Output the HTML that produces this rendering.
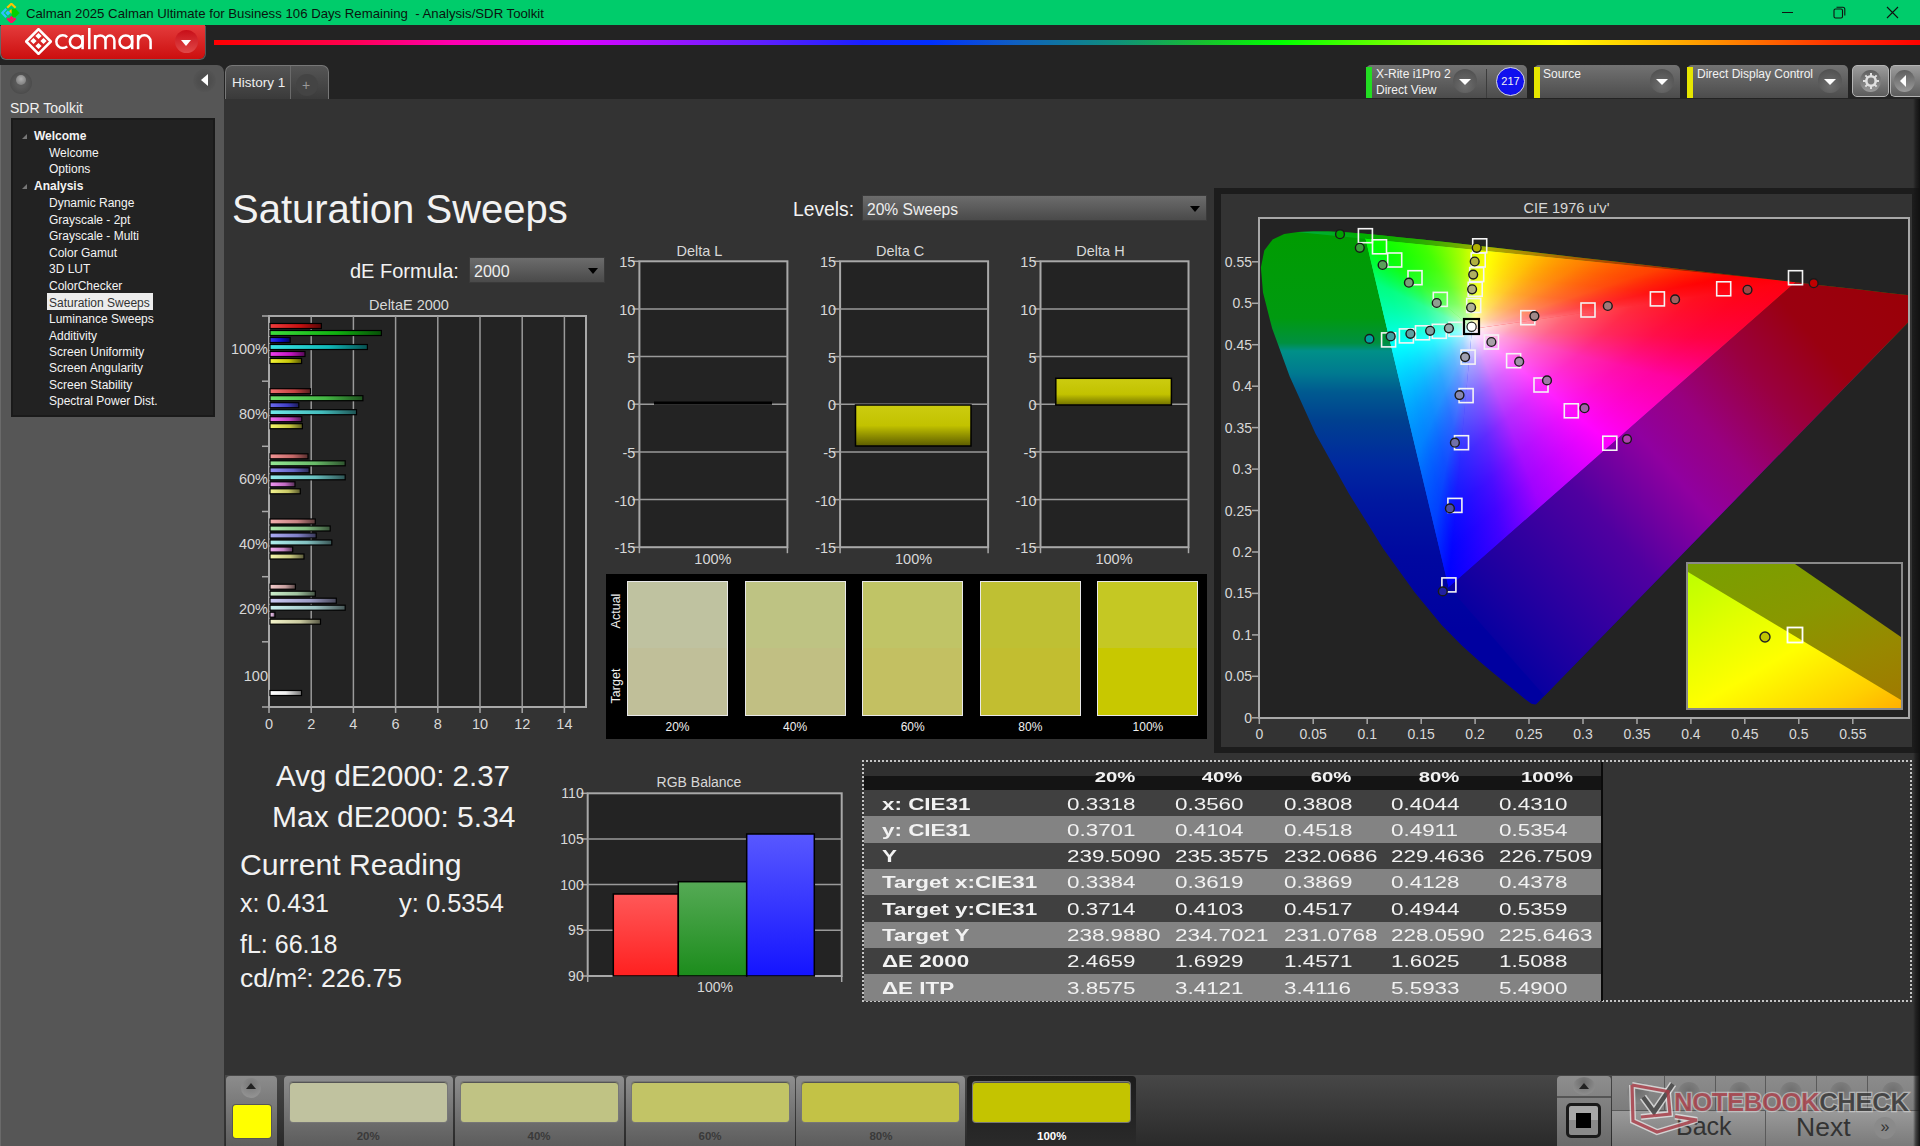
<!DOCTYPE html>
<html><head><meta charset="utf-8">
<style>
*{margin:0;padding:0;box-sizing:border-box}
html,body{width:1920px;height:1146px;overflow:hidden;background:#333;font-family:"Liberation Sans",sans-serif;color:#eee}
.a{position:absolute}
#title{left:0;top:0;width:1920px;height:25px;background:#00cc6b;color:#111;font-size:13.2px}
#hdr{left:0;top:25px;width:1920px;height:74px;background:#232323}
#side{left:0;top:65px;width:224px;height:1081px;background:#565656;border-radius:0 7px 0 0;border-left:1px solid #6a6a6a}
#content{left:225px;top:99px;width:1695px;height:1047px;background:#333}
.inst{top:65px;height:33px;border-radius:5px 5px 0 0;background:linear-gradient(#727272,#4c4c4c);font-size:12px;color:#f2f2f2;line-height:16px}
.stripe{left:0;top:2px;width:6px;bottom:0}
.dd{width:24px;height:24px;border-radius:50%;background:radial-gradient(circle at 50% 70%,#6e6e6e,#4a4a4a);top:4px}
.dd:after{content:"";position:absolute;left:6px;top:10px;border-left:6px solid transparent;border-right:6px solid transparent;border-top:6px solid #fff}
.tree{font-size:12px;color:#f4f4f4;left:0;white-space:nowrap;line-height:14px}
</style></head><body>
<div id="title" class="a">
 <svg class="a" style="left:1px;top:3px" width="20" height="20" viewBox="0 0 20 20">
  <path d="M6.2 4.8L10.4 0.8L14.6 4.8" fill="none" stroke="#ffc400" stroke-width="2.2"/><rect x="8.7" y="6.6" width="3.5" height="3.5" transform="rotate(45 10.45 8.35)" fill="#ffc400"/>
  <path d="M5.2 5.8L1.2 10L5.2 14.2" fill="none" stroke="#30c0ff" stroke-width="2.2"/><rect x="5.2" y="8.3" width="3.5" height="3.5" transform="rotate(45 6.95 10.05)" fill="#30c0ff"/>
  <path d="M10.6 5.8L14.6 5.8L18.6 10L14.6 14.2L10.6 14.2Z" fill="#00d000" transform="rotate(0)"/>
  <path d="M6.2 15.4L10.4 19.4L14.6 15.4" fill="none" stroke="#ff1060" stroke-width="2.2"/><rect x="8.7" y="13.4" width="3.5" height="3.5" transform="rotate(45 10.45 15.15)" fill="#ff1060"/>
 </svg>
 <div class="a" style="left:26px;top:5.5px;white-space:pre;color:#0a140e">Calman 2025 Calman Ultimate for Business 106 Days Remaining  - Analysis/SDR Toolkit</div>
 <div class="a" style="left:1782px;top:12px;width:11px;height:1px;background:#111"></div>
 <svg class="a" style="left:1833px;top:6px" width="14" height="13" viewBox="0 0 14 13"><rect x="1" y="3" width="8.5" height="9" rx="1.5" fill="none" stroke="#111" stroke-width="1.1"/><path d="M3.5 1.2h6.3a2 2 0 0 1 2 2v6.3" fill="none" stroke="#111" stroke-width="1.1"/></svg>
 <svg class="a" style="left:1886px;top:6px" width="13" height="13" viewBox="0 0 13 13"><path d="M1 1L12 12M12 1L1 12" stroke="#111" stroke-width="1.1"/></svg>
</div>
<div id="hdr" class="a">
 <div class="a" style="left:1px;top:0;width:204px;height:33.5px;border-radius:0 0 6px 6px;background:linear-gradient(#e43c3c,#cc0e0e);box-shadow:-1px 1px 0 0 #666,1px 1px 0 0 #555"></div>
 <svg class="a" style="left:25px;top:3px" width="27" height="27" viewBox="0 0 27 27">
  <path d="M13.5 1.2L25.8 13.5L13.5 25.8L1.2 13.5Z" fill="none" stroke="#fff" stroke-width="2.6" stroke-linejoin="round"/>
  <g fill="#fff"><rect x="11.3" y="5.8" width="4.4" height="4.4" transform="rotate(45 13.5 8)"/><rect x="6.3" y="10.8" width="4.4" height="4.4" transform="rotate(45 8.5 13)"/><rect x="16.3" y="10.8" width="4.4" height="4.4" transform="rotate(45 18.5 13)"/><rect x="11.3" y="15.8" width="4.4" height="4.4" transform="rotate(45 13.5 18)"/></g>
 </svg>
 <svg class="a" style="left:0;top:-25px" width="160" height="60" viewBox="0 0 160 60"><g fill="none" stroke="#fff" stroke-width="2.5">
  <path d="M67.2 37.1 A6.4 6.4 0 1 0 67.2 46.3"/>
  <circle cx="76.2" cy="41.7" r="6.3"/><path d="M82.6 35 V49.2"/>
  <path d="M89.3 28 V49.2"/>
  <path d="M95.1 49.2 V35 M95.1 40.7 A5.2 5.3 0 0 1 105.5 40.7 V49.2 M105.5 40.7 A4.45 5.3 0 0 1 114.4 40.7 V49.2"/>
  <circle cx="125.8" cy="41.7" r="6.3"/><path d="M132.2 35 V49.2"/>
  <path d="M138.1 49.2 V35 M138.1 41.6 A6.25 6.3 0 0 1 150.6 41.6 V49.2"/>
 </g></svg>
 <div class="a" style="left:175px;top:5px;width:23px;height:23px;border-radius:50%;background:linear-gradient(#c80e18,#e04848)"></div>
 <div class="a" style="left:181px;top:15px;border-left:5.5px solid transparent;border-right:5.5px solid transparent;border-top:6px solid #fff"></div>
 <div class="a" style="left:214px;top:15px;width:1706px;height:5px;background:linear-gradient(90deg,#ff0000 0%,#ff0050 8%,#ff00b0 14%,#e000ff 21%,#b010ff 25%,#6020ff 32%,#1a20ff 38%,#0030ff 42%,#1060c0 47%,#10907a 53%,#18c030 58%,#00ff00 62.5%,#90ff00 71%,#ffff00 79%,#ff9000 88%,#ff3000 95%,#ff0000 100%)"></div>
</div>
<div id="side" class="a">
 <div class="a" style="left:9px;top:7px;width:22px;height:22px;border-radius:50%;background:radial-gradient(circle,#5a5a5a 30%,#4c4c4c 70%,#555 100%)"></div>
 <div class="a" style="left:15px;top:10px;width:10px;height:10px;border-radius:50%;background:radial-gradient(circle at 50% 40%,#b0b0b0,#707070)"></div>
 <div class="a" style="left:192px;top:4px;width:23px;height:23px;border-radius:50%;background:radial-gradient(circle,#4e4e4e 40%,#5a5a5a 100%)"></div>
 <div class="a" style="left:200px;top:9px;border-top:6px solid transparent;border-bottom:6px solid transparent;border-right:7px solid #fff"></div>
 <div class="a" style="left:9px;top:35px;font-size:14px;color:#f0f0f0">SDR Toolkit</div>
 <div class="a" style="left:10px;top:53px;width:204px;height:299px;background:#222;border:2px solid #1a1a1a">
  <div class="a tree" style="top:9px;left:21px;font-weight:bold">Welcome</div>
  <div class="a tree" style="top:26px;left:36px">Welcome</div>
  <div class="a tree" style="top:42px;left:36px">Options</div>
  <div class="a tree" style="top:59px;left:21px;font-weight:bold">Analysis</div>
  <div class="a tree" style="top:76px;left:36px">Dynamic Range</div>
  <div class="a tree" style="top:93px;left:36px">Grayscale - 2pt</div>
  <div class="a tree" style="top:109px;left:36px">Grayscale - Multi</div>
  <div class="a tree" style="top:126px;left:36px">Color Gamut</div>
  <div class="a tree" style="top:142px;left:36px">3D LUT</div>
  <div class="a tree" style="top:159px;left:36px">ColorChecker</div>
  <div class="a" style="top:173px;left:34px;width:106px;height:17px;background:#ececec"></div>
  <div class="a tree" style="top:176px;left:36px;color:#333">Saturation Sweeps</div>
  <div class="a tree" style="top:192px;left:36px">Luminance Sweeps</div>
  <div class="a tree" style="top:209px;left:36px">Additivity</div>
  <div class="a tree" style="top:225px;left:36px">Screen Uniformity</div>
  <div class="a tree" style="top:241px;left:36px">Screen Angularity</div>
  <div class="a tree" style="top:258px;left:36px">Screen Stability</div>
  <div class="a tree" style="top:274px;left:36px">Spectral Power Dist.</div>
  <div class="a" style="left:9px;top:14px;border-left:5px solid transparent;border-bottom:5px solid #777"></div>
  <div class="a" style="left:9px;top:64px;border-left:5px solid transparent;border-bottom:5px solid #777"></div>
 </div>
</div>
<div class="a" style="left:225px;top:65px;width:104px;height:34px;border-radius:7px 7px 0 0;background:linear-gradient(#555,#3a3a3a);border:1px solid #777;border-bottom:none">
 <div class="a" style="left:6px;top:9px;font-size:13.5px;color:#eee">History 1</div>
 <div class="a" style="left:64px;top:0;width:1px;bottom:0;background:#6a6a6a"></div>
 <div class="a" style="left:70px;top:8px;width:22px;height:22px;border-radius:50%;background:#444"></div>
 <div class="a" style="left:76px;top:11px;font-size:14px;color:#999">+</div>
</div>
<div id="content" class="a"></div>
<!-- instruments -->
<div class="a inst" style="left:1366px;width:161px">
 <div class="a stripe" style="background:#22dd22"></div>
 <div class="a" style="left:10px;top:1px">X-Rite i1Pro 2<br>Direct View</div>
 <div class="a dd" style="left:87px"></div>
 <div class="a" style="left:120px;top:4px;width:1px;bottom:0;background:#3c3c3c"></div>
 <div class="a" style="left:130px;top:2px;width:29px;height:29px;border-radius:50%;background:#1010ee;border:1px solid #ddd;font-size:11px;text-align:center;line-height:27px">217</div>
</div>
<div class="a inst" style="left:1534px;width:146px">
 <div class="a stripe" style="background:#e6e600"></div>
 <div class="a" style="left:9px;top:1px">Source</div>
 <div class="a dd" style="left:116px"></div>
</div>
<div class="a inst" style="left:1687px;width:161px">
 <div class="a stripe" style="background:#e6e600"></div>
 <div class="a" style="left:10px;top:1px">Direct Display Control</div>
 <div class="a dd" style="left:131px"></div>
</div>
<div class="a" style="left:1852px;top:65px;width:37px;height:32px;border-radius:5px;background:linear-gradient(#9c9c9c,#5c5c5c);border:1.5px solid #b4b4b4">
 <div class="a" style="left:7px;top:4px;width:21px;height:22px;border-radius:50%;background:linear-gradient(#5e5e5e,#9a9a9a)"></div>
 <svg class="a" style="left:7.5px;top:5px" width="20" height="20" viewBox="0 0 20 20"><g fill="#e0e0e0"><rect x="9" y="2" width="2" height="16"/><rect x="9" y="2" width="2" height="16" transform="rotate(45 10 10)"/><rect x="9" y="2" width="2" height="16" transform="rotate(90 10 10)"/><rect x="9" y="2" width="2" height="16" transform="rotate(135 10 10)"/><circle cx="10" cy="10" r="6"/></g><circle cx="10" cy="10" r="3.4" fill="#7a7a7a"/></svg>
</div>
<div class="a" style="left:1890px;top:65px;width:30px;height:32px;border-radius:5px 0 0 5px;background:linear-gradient(#9c9c9c,#5c5c5c);border:1.5px solid #b4b4b4;border-right:none">
 <div class="a" style="left:3px;top:4px;width:21px;height:22px;border-radius:50%;background:linear-gradient(#5e5e5e,#9a9a9a)"></div>
 <div class="a" style="left:9px;top:9px;border-top:6px solid transparent;border-bottom:6px solid transparent;border-right:6.5px solid #fff"></div>
</div>
<svg class="a" style="left:0;top:0;font-family:'Liberation Sans',sans-serif" width="1920" height="1146" viewBox="0 0 1920 1146"><defs><linearGradient id="bg00" x1="0" y1="0" x2="1" y2="0"><stop offset="0" stop-color="rgb(241, 61, 61)"/><stop offset="0.6" stop-color="rgb(196, 16, 16)"/><stop offset="1" stop-color="rgb(88, 7, 7)"/></linearGradient><linearGradient id="bg01" x1="0" y1="0" x2="1" y2="0"><stop offset="0" stop-color="rgb(61, 221, 61)"/><stop offset="0.6" stop-color="rgb(16, 176, 16)"/><stop offset="1" stop-color="rgb(7, 79, 7)"/></linearGradient><linearGradient id="bg02" x1="0" y1="0" x2="1" y2="0"><stop offset="0" stop-color="rgb(55, 55, 241)"/><stop offset="0.6" stop-color="rgb(10, 10, 196)"/><stop offset="1" stop-color="rgb(4, 4, 88)"/></linearGradient><linearGradient id="bg03" x1="0" y1="0" x2="1" y2="0"><stop offset="0" stop-color="rgb(61, 229, 229)"/><stop offset="0.6" stop-color="rgb(16, 184, 184)"/><stop offset="1" stop-color="rgb(7, 82, 82)"/></linearGradient><linearGradient id="bg04" x1="0" y1="0" x2="1" y2="0"><stop offset="0" stop-color="rgb(237, 65, 237)"/><stop offset="0.6" stop-color="rgb(192, 20, 192)"/><stop offset="1" stop-color="rgb(86, 9, 86)"/></linearGradient><linearGradient id="bg05" x1="0" y1="0" x2="1" y2="0"><stop offset="0" stop-color="rgb(245, 245, 55)"/><stop offset="0.6" stop-color="rgb(200, 200, 10)"/><stop offset="1" stop-color="rgb(90, 90, 4)"/></linearGradient><linearGradient id="bg10" x1="0" y1="0" x2="1" y2="0"><stop offset="0" stop-color="rgb(242, 112, 112)"/><stop offset="0.6" stop-color="rgb(197, 67, 67)"/><stop offset="1" stop-color="rgb(88, 30, 30)"/></linearGradient><linearGradient id="bg11" x1="0" y1="0" x2="1" y2="0"><stop offset="0" stop-color="rgb(112, 227, 112)"/><stop offset="0.6" stop-color="rgb(67, 182, 67)"/><stop offset="1" stop-color="rgb(30, 81, 30)"/></linearGradient><linearGradient id="bg12" x1="0" y1="0" x2="1" y2="0"><stop offset="0" stop-color="rgb(108, 108, 242)"/><stop offset="0.6" stop-color="rgb(63, 63, 197)"/><stop offset="1" stop-color="rgb(28, 28, 88)"/></linearGradient><linearGradient id="bg13" x1="0" y1="0" x2="1" y2="0"><stop offset="0" stop-color="rgb(112, 233, 233)"/><stop offset="0.6" stop-color="rgb(67, 188, 188)"/><stop offset="1" stop-color="rgb(30, 84, 84)"/></linearGradient><linearGradient id="bg14" x1="0" y1="0" x2="1" y2="0"><stop offset="0" stop-color="rgb(239, 115, 239)"/><stop offset="0.6" stop-color="rgb(194, 70, 194)"/><stop offset="1" stop-color="rgb(87, 31, 87)"/></linearGradient><linearGradient id="bg15" x1="0" y1="0" x2="1" y2="0"><stop offset="0" stop-color="rgb(245, 245, 108)"/><stop offset="0.6" stop-color="rgb(200, 200, 63)"/><stop offset="1" stop-color="rgb(90, 90, 28)"/></linearGradient><linearGradient id="bg20" x1="0" y1="0" x2="1" y2="0"><stop offset="0" stop-color="rgb(242, 149, 149)"/><stop offset="0.6" stop-color="rgb(197, 104, 104)"/><stop offset="1" stop-color="rgb(88, 46, 46)"/></linearGradient><linearGradient id="bg21" x1="0" y1="0" x2="1" y2="0"><stop offset="0" stop-color="rgb(149, 232, 149)"/><stop offset="0.6" stop-color="rgb(104, 187, 104)"/><stop offset="1" stop-color="rgb(46, 84, 46)"/></linearGradient><linearGradient id="bg22" x1="0" y1="0" x2="1" y2="0"><stop offset="0" stop-color="rgb(146, 146, 242)"/><stop offset="0.6" stop-color="rgb(101, 101, 197)"/><stop offset="1" stop-color="rgb(45, 45, 88)"/></linearGradient><linearGradient id="bg23" x1="0" y1="0" x2="1" y2="0"><stop offset="0" stop-color="rgb(149, 236, 236)"/><stop offset="0.6" stop-color="rgb(104, 191, 191)"/><stop offset="1" stop-color="rgb(46, 85, 85)"/></linearGradient><linearGradient id="bg24" x1="0" y1="0" x2="1" y2="0"><stop offset="0" stop-color="rgb(240, 151, 240)"/><stop offset="0.6" stop-color="rgb(195, 106, 195)"/><stop offset="1" stop-color="rgb(87, 47, 87)"/></linearGradient><linearGradient id="bg25" x1="0" y1="0" x2="1" y2="0"><stop offset="0" stop-color="rgb(245, 245, 146)"/><stop offset="0.6" stop-color="rgb(200, 200, 101)"/><stop offset="1" stop-color="rgb(90, 90, 45)"/></linearGradient><linearGradient id="bg30" x1="0" y1="0" x2="1" y2="0"><stop offset="0" stop-color="rgb(243, 175, 175)"/><stop offset="0.6" stop-color="rgb(198, 130, 130)"/><stop offset="1" stop-color="rgb(89, 58, 58)"/></linearGradient><linearGradient id="bg31" x1="0" y1="0" x2="1" y2="0"><stop offset="0" stop-color="rgb(175, 235, 175)"/><stop offset="0.6" stop-color="rgb(130, 190, 130)"/><stop offset="1" stop-color="rgb(58, 85, 58)"/></linearGradient><linearGradient id="bg32" x1="0" y1="0" x2="1" y2="0"><stop offset="0" stop-color="rgb(172, 172, 243)"/><stop offset="0.6" stop-color="rgb(127, 127, 198)"/><stop offset="1" stop-color="rgb(57, 57, 89)"/></linearGradient><linearGradient id="bg33" x1="0" y1="0" x2="1" y2="0"><stop offset="0" stop-color="rgb(175, 238, 238)"/><stop offset="0.6" stop-color="rgb(130, 193, 193)"/><stop offset="1" stop-color="rgb(58, 86, 86)"/></linearGradient><linearGradient id="bg34" x1="0" y1="0" x2="1" y2="0"><stop offset="0" stop-color="rgb(241, 176, 241)"/><stop offset="0.6" stop-color="rgb(196, 131, 196)"/><stop offset="1" stop-color="rgb(88, 58, 88)"/></linearGradient><linearGradient id="bg35" x1="0" y1="0" x2="1" y2="0"><stop offset="0" stop-color="rgb(245, 245, 172)"/><stop offset="0.6" stop-color="rgb(200, 200, 127)"/><stop offset="1" stop-color="rgb(90, 90, 57)"/></linearGradient><linearGradient id="bg40" x1="0" y1="0" x2="1" y2="0"><stop offset="0" stop-color="rgb(244, 204, 204)"/><stop offset="0.6" stop-color="rgb(199, 159, 159)"/><stop offset="1" stop-color="rgb(89, 71, 71)"/></linearGradient><linearGradient id="bg41" x1="0" y1="0" x2="1" y2="0"><stop offset="0" stop-color="rgb(204, 239, 204)"/><stop offset="0.6" stop-color="rgb(159, 194, 159)"/><stop offset="1" stop-color="rgb(71, 87, 71)"/></linearGradient><linearGradient id="bg42" x1="0" y1="0" x2="1" y2="0"><stop offset="0" stop-color="rgb(203, 203, 244)"/><stop offset="0.6" stop-color="rgb(158, 158, 199)"/><stop offset="1" stop-color="rgb(71, 71, 89)"/></linearGradient><linearGradient id="bg43" x1="0" y1="0" x2="1" y2="0"><stop offset="0" stop-color="rgb(204, 241, 241)"/><stop offset="0.6" stop-color="rgb(159, 196, 196)"/><stop offset="1" stop-color="rgb(71, 88, 88)"/></linearGradient><linearGradient id="bg44" x1="0" y1="0" x2="1" y2="0"><stop offset="0" stop-color="rgb(243, 205, 243)"/><stop offset="0.6" stop-color="rgb(198, 160, 198)"/><stop offset="1" stop-color="rgb(89, 72, 89)"/></linearGradient><linearGradient id="bg45" x1="0" y1="0" x2="1" y2="0"><stop offset="0" stop-color="rgb(245, 245, 203)"/><stop offset="0.6" stop-color="rgb(200, 200, 158)"/><stop offset="1" stop-color="rgb(90, 90, 71)"/></linearGradient><linearGradient id="bgw" x1="0" y1="0" x2="1" y2="0"><stop offset="0" stop-color="#fff"/><stop offset="0.5" stop-color="#eee"/><stop offset="1" stop-color="#777"/></linearGradient><linearGradient id="ybar" x1="0" y1="0" x2="0" y2="1"><stop offset="0" stop-color="#cccc10"/><stop offset="0.5" stop-color="#c2c200"/><stop offset="1" stop-color="#5c5c00"/></linearGradient><linearGradient id="ybar2" x1="0" y1="0" x2="0" y2="1"><stop offset="0" stop-color="#cccc10"/><stop offset="0.6" stop-color="#c2c200"/><stop offset="1" stop-color="#707000"/></linearGradient><linearGradient id="rr" x1="0" y1="0" x2="0" y2="1"><stop offset="0" stop-color="#ff5858"/><stop offset="1" stop-color="#ff2020"/></linearGradient><linearGradient id="rg" x1="0" y1="0" x2="0" y2="1"><stop offset="0" stop-color="#55aa55"/><stop offset="1" stop-color="#1c8c1c"/></linearGradient><linearGradient id="rb" x1="0" y1="0" x2="0" y2="1"><stop offset="0" stop-color="#5858ff"/><stop offset="1" stop-color="#1414ff"/></linearGradient></defs><rect x="269" y="316" width="317" height="391" fill="#232323" stroke="#a8a8a8" stroke-width="2"/><line x1="311.2" y1="316" x2="311.2" y2="707" stroke="#9a9a9a" stroke-width="1.5"/><line x1="353.4" y1="316" x2="353.4" y2="707" stroke="#9a9a9a" stroke-width="1.5"/><line x1="395.6" y1="316" x2="395.6" y2="707" stroke="#9a9a9a" stroke-width="1.5"/><line x1="437.8" y1="316" x2="437.8" y2="707" stroke="#9a9a9a" stroke-width="1.5"/><line x1="480.0" y1="316" x2="480.0" y2="707" stroke="#9a9a9a" stroke-width="1.5"/><line x1="522.2" y1="316" x2="522.2" y2="707" stroke="#9a9a9a" stroke-width="1.5"/><line x1="564.4" y1="316" x2="564.4" y2="707" stroke="#9a9a9a" stroke-width="1.5"/><line x1="269.0" y1="707" x2="269.0" y2="713" stroke="#a8a8a8" stroke-width="1.5"/><text x="269.0" y="729" font-size="14.5" text-anchor="middle" fill="#d8d8d8" font-weight="normal" >0</text><line x1="311.2" y1="707" x2="311.2" y2="713" stroke="#a8a8a8" stroke-width="1.5"/><text x="311.2" y="729" font-size="14.5" text-anchor="middle" fill="#d8d8d8" font-weight="normal" >2</text><line x1="353.4" y1="707" x2="353.4" y2="713" stroke="#a8a8a8" stroke-width="1.5"/><text x="353.4" y="729" font-size="14.5" text-anchor="middle" fill="#d8d8d8" font-weight="normal" >4</text><line x1="395.6" y1="707" x2="395.6" y2="713" stroke="#a8a8a8" stroke-width="1.5"/><text x="395.6" y="729" font-size="14.5" text-anchor="middle" fill="#d8d8d8" font-weight="normal" >6</text><line x1="437.8" y1="707" x2="437.8" y2="713" stroke="#a8a8a8" stroke-width="1.5"/><text x="437.8" y="729" font-size="14.5" text-anchor="middle" fill="#d8d8d8" font-weight="normal" >8</text><line x1="480.0" y1="707" x2="480.0" y2="713" stroke="#a8a8a8" stroke-width="1.5"/><text x="480.0" y="729" font-size="14.5" text-anchor="middle" fill="#d8d8d8" font-weight="normal" >10</text><line x1="522.2" y1="707" x2="522.2" y2="713" stroke="#a8a8a8" stroke-width="1.5"/><text x="522.2" y="729" font-size="14.5" text-anchor="middle" fill="#d8d8d8" font-weight="normal" >12</text><line x1="564.4" y1="707" x2="564.4" y2="713" stroke="#a8a8a8" stroke-width="1.5"/><text x="564.4" y="729" font-size="14.5" text-anchor="middle" fill="#d8d8d8" font-weight="normal" >14</text><line x1="262" y1="316.0" x2="269" y2="316.0" stroke="#a8a8a8" stroke-width="1.5"/><line x1="262" y1="381.2" x2="269" y2="381.2" stroke="#a8a8a8" stroke-width="1.5"/><line x1="262" y1="446.3" x2="269" y2="446.3" stroke="#a8a8a8" stroke-width="1.5"/><line x1="262" y1="511.5" x2="269" y2="511.5" stroke="#a8a8a8" stroke-width="1.5"/><line x1="262" y1="576.7" x2="269" y2="576.7" stroke="#a8a8a8" stroke-width="1.5"/><line x1="262" y1="641.8" x2="269" y2="641.8" stroke="#a8a8a8" stroke-width="1.5"/><line x1="262" y1="707.0" x2="269" y2="707.0" stroke="#a8a8a8" stroke-width="1.5"/><text x="268" y="353.6" font-size="14.5" text-anchor="end" fill="#d8d8d8" font-weight="normal" >100%</text><text x="268" y="418.8" font-size="14.5" text-anchor="end" fill="#d8d8d8" font-weight="normal" >80%</text><text x="268" y="483.9" font-size="14.5" text-anchor="end" fill="#d8d8d8" font-weight="normal" >60%</text><text x="268" y="549.1" font-size="14.5" text-anchor="end" fill="#d8d8d8" font-weight="normal" >40%</text><text x="268" y="614.2" font-size="14.5" text-anchor="end" fill="#d8d8d8" font-weight="normal" >20%</text><text x="268" y="681.4" font-size="14.5" text-anchor="end" fill="#d8d8d8" font-weight="normal" >100</text><text x="409" y="310" font-size="14.5" text-anchor="middle" fill="#d8d8d8" font-weight="normal" >DeltaE 2000</text><rect x="270" y="323.5" width="51.4" height="5" fill="url(#bg00)" stroke="#000" stroke-width="1.2"/><rect x="270" y="330.5" width="111.4" height="5" fill="url(#bg01)" stroke="#000" stroke-width="1.2"/><rect x="270" y="337.5" width="20.2" height="5" fill="url(#bg02)" stroke="#000" stroke-width="1.2"/><rect x="270" y="344.5" width="97.4" height="5" fill="url(#bg03)" stroke="#000" stroke-width="1.2"/><rect x="270" y="351.5" width="35.0" height="5" fill="url(#bg04)" stroke="#000" stroke-width="1.2"/><rect x="270" y="358.5" width="31.6" height="5" fill="url(#bg05)" stroke="#000" stroke-width="1.2"/><rect x="270" y="388.7" width="40.5" height="5" fill="url(#bg10)" stroke="#000" stroke-width="1.2"/><rect x="270" y="395.7" width="92.9" height="5" fill="url(#bg11)" stroke="#000" stroke-width="1.2"/><rect x="270" y="402.7" width="28.8" height="5" fill="url(#bg12)" stroke="#000" stroke-width="1.2"/><rect x="270" y="409.7" width="86.5" height="5" fill="url(#bg13)" stroke="#000" stroke-width="1.2"/><rect x="270" y="416.7" width="31.8" height="5" fill="url(#bg14)" stroke="#000" stroke-width="1.2"/><rect x="270" y="423.7" width="32.4" height="5" fill="url(#bg15)" stroke="#000" stroke-width="1.2"/><rect x="270" y="453.8" width="38.0" height="5" fill="url(#bg20)" stroke="#000" stroke-width="1.2"/><rect x="270" y="460.8" width="75.2" height="5" fill="url(#bg21)" stroke="#000" stroke-width="1.2"/><rect x="270" y="467.8" width="39.2" height="5" fill="url(#bg22)" stroke="#000" stroke-width="1.2"/><rect x="270" y="474.8" width="75.2" height="5" fill="url(#bg23)" stroke="#000" stroke-width="1.2"/><rect x="270" y="481.8" width="25.0" height="5" fill="url(#bg24)" stroke="#000" stroke-width="1.2"/><rect x="270" y="488.8" width="30.3" height="5" fill="url(#bg25)" stroke="#000" stroke-width="1.2"/><rect x="270" y="519.0" width="45.3" height="5" fill="url(#bg30)" stroke="#000" stroke-width="1.2"/><rect x="270" y="526.0" width="60.2" height="5" fill="url(#bg31)" stroke="#000" stroke-width="1.2"/><rect x="270" y="533.0" width="46.2" height="5" fill="url(#bg32)" stroke="#000" stroke-width="1.2"/><rect x="270" y="540.0" width="61.8" height="5" fill="url(#bg33)" stroke="#000" stroke-width="1.2"/><rect x="270" y="547.0" width="22.7" height="5" fill="url(#bg34)" stroke="#000" stroke-width="1.2"/><rect x="270" y="554.0" width="34.0" height="5" fill="url(#bg35)" stroke="#000" stroke-width="1.2"/><rect x="270" y="584.2" width="25.4" height="5" fill="url(#bg40)" stroke="#000" stroke-width="1.2"/><rect x="270" y="591.2" width="45.3" height="5" fill="url(#bg41)" stroke="#000" stroke-width="1.2"/><rect x="270" y="598.2" width="66.3" height="5" fill="url(#bg42)" stroke="#000" stroke-width="1.2"/><rect x="270" y="605.2" width="75.2" height="5" fill="url(#bg43)" stroke="#000" stroke-width="1.2"/><rect x="270" y="612.2" width="5.0" height="5" fill="url(#bg44)" stroke="#000" stroke-width="1.2"/><rect x="270" y="619.2" width="50.5" height="5" fill="url(#bg45)" stroke="#000" stroke-width="1.2"/><rect x="270" y="690.5" width="31.5" height="5" fill="url(#bgw)" stroke="#000" stroke-width="1.2"/><rect x="639.4" y="261.3" width="148" height="285.9" fill="#232323" stroke="#a8a8a8" stroke-width="2"/><line x1="632.4" y1="261.3" x2="639.4" y2="261.3" stroke="#a8a8a8" stroke-width="1.5"/><text x="635.4" y="267.3" font-size="14.5" text-anchor="end" fill="#d8d8d8" font-weight="normal" >15</text><line x1="639.4" y1="309.0" x2="787.4" y2="309.0" stroke="#9a9a9a" stroke-width="1.5"/><line x1="632.4" y1="309.0" x2="639.4" y2="309.0" stroke="#a8a8a8" stroke-width="1.5"/><text x="635.4" y="315.0" font-size="14.5" text-anchor="end" fill="#d8d8d8" font-weight="normal" >10</text><line x1="639.4" y1="356.6" x2="787.4" y2="356.6" stroke="#9a9a9a" stroke-width="1.5"/><line x1="632.4" y1="356.6" x2="639.4" y2="356.6" stroke="#a8a8a8" stroke-width="1.5"/><text x="635.4" y="362.6" font-size="14.5" text-anchor="end" fill="#d8d8d8" font-weight="normal" >5</text><line x1="639.4" y1="404.2" x2="787.4" y2="404.2" stroke="#9a9a9a" stroke-width="1.5"/><line x1="632.4" y1="404.2" x2="639.4" y2="404.2" stroke="#a8a8a8" stroke-width="1.5"/><text x="635.4" y="410.2" font-size="14.5" text-anchor="end" fill="#d8d8d8" font-weight="normal" >0</text><line x1="639.4" y1="451.9" x2="787.4" y2="451.9" stroke="#9a9a9a" stroke-width="1.5"/><line x1="632.4" y1="451.9" x2="639.4" y2="451.9" stroke="#a8a8a8" stroke-width="1.5"/><text x="635.4" y="457.9" font-size="14.5" text-anchor="end" fill="#d8d8d8" font-weight="normal" >-5</text><line x1="639.4" y1="499.6" x2="787.4" y2="499.6" stroke="#9a9a9a" stroke-width="1.5"/><line x1="632.4" y1="499.6" x2="639.4" y2="499.6" stroke="#a8a8a8" stroke-width="1.5"/><text x="635.4" y="505.6" font-size="14.5" text-anchor="end" fill="#d8d8d8" font-weight="normal" >-10</text><line x1="632.4" y1="547.2" x2="639.4" y2="547.2" stroke="#a8a8a8" stroke-width="1.5"/><text x="635.4" y="553.2" font-size="14.5" text-anchor="end" fill="#d8d8d8" font-weight="normal" >-15</text><line x1="639.4" y1="547.2" x2="639.4" y2="553.2" stroke="#a8a8a8" stroke-width="1.5"/><line x1="787.4" y1="547.2" x2="787.4" y2="553.2" stroke="#a8a8a8" stroke-width="1.5"/><text x="712.9" y="564" font-size="14.5" text-anchor="middle" fill="#d8d8d8" font-weight="normal" >100%</text><text x="699.4" y="256" font-size="14.5" text-anchor="middle" fill="#d8d8d8" font-weight="normal" >Delta L</text><rect x="840.1" y="261.3" width="148" height="285.9" fill="#232323" stroke="#a8a8a8" stroke-width="2"/><line x1="833.1" y1="261.3" x2="840.1" y2="261.3" stroke="#a8a8a8" stroke-width="1.5"/><text x="836.1" y="267.3" font-size="14.5" text-anchor="end" fill="#d8d8d8" font-weight="normal" >15</text><line x1="840.1" y1="309.0" x2="988.1" y2="309.0" stroke="#9a9a9a" stroke-width="1.5"/><line x1="833.1" y1="309.0" x2="840.1" y2="309.0" stroke="#a8a8a8" stroke-width="1.5"/><text x="836.1" y="315.0" font-size="14.5" text-anchor="end" fill="#d8d8d8" font-weight="normal" >10</text><line x1="840.1" y1="356.6" x2="988.1" y2="356.6" stroke="#9a9a9a" stroke-width="1.5"/><line x1="833.1" y1="356.6" x2="840.1" y2="356.6" stroke="#a8a8a8" stroke-width="1.5"/><text x="836.1" y="362.6" font-size="14.5" text-anchor="end" fill="#d8d8d8" font-weight="normal" >5</text><line x1="840.1" y1="404.2" x2="988.1" y2="404.2" stroke="#9a9a9a" stroke-width="1.5"/><line x1="833.1" y1="404.2" x2="840.1" y2="404.2" stroke="#a8a8a8" stroke-width="1.5"/><text x="836.1" y="410.2" font-size="14.5" text-anchor="end" fill="#d8d8d8" font-weight="normal" >0</text><line x1="840.1" y1="451.9" x2="988.1" y2="451.9" stroke="#9a9a9a" stroke-width="1.5"/><line x1="833.1" y1="451.9" x2="840.1" y2="451.9" stroke="#a8a8a8" stroke-width="1.5"/><text x="836.1" y="457.9" font-size="14.5" text-anchor="end" fill="#d8d8d8" font-weight="normal" >-5</text><line x1="840.1" y1="499.6" x2="988.1" y2="499.6" stroke="#9a9a9a" stroke-width="1.5"/><line x1="833.1" y1="499.6" x2="840.1" y2="499.6" stroke="#a8a8a8" stroke-width="1.5"/><text x="836.1" y="505.6" font-size="14.5" text-anchor="end" fill="#d8d8d8" font-weight="normal" >-10</text><line x1="833.1" y1="547.2" x2="840.1" y2="547.2" stroke="#a8a8a8" stroke-width="1.5"/><text x="836.1" y="553.2" font-size="14.5" text-anchor="end" fill="#d8d8d8" font-weight="normal" >-15</text><line x1="840.1" y1="547.2" x2="840.1" y2="553.2" stroke="#a8a8a8" stroke-width="1.5"/><line x1="988.1" y1="547.2" x2="988.1" y2="553.2" stroke="#a8a8a8" stroke-width="1.5"/><text x="913.6" y="564" font-size="14.5" text-anchor="middle" fill="#d8d8d8" font-weight="normal" >100%</text><text x="900.1" y="256" font-size="14.5" text-anchor="middle" fill="#d8d8d8" font-weight="normal" >Delta C</text><rect x="1040.5" y="261.3" width="148" height="285.9" fill="#232323" stroke="#a8a8a8" stroke-width="2"/><line x1="1033.5" y1="261.3" x2="1040.5" y2="261.3" stroke="#a8a8a8" stroke-width="1.5"/><text x="1036.5" y="267.3" font-size="14.5" text-anchor="end" fill="#d8d8d8" font-weight="normal" >15</text><line x1="1040.5" y1="309.0" x2="1188.5" y2="309.0" stroke="#9a9a9a" stroke-width="1.5"/><line x1="1033.5" y1="309.0" x2="1040.5" y2="309.0" stroke="#a8a8a8" stroke-width="1.5"/><text x="1036.5" y="315.0" font-size="14.5" text-anchor="end" fill="#d8d8d8" font-weight="normal" >10</text><line x1="1040.5" y1="356.6" x2="1188.5" y2="356.6" stroke="#9a9a9a" stroke-width="1.5"/><line x1="1033.5" y1="356.6" x2="1040.5" y2="356.6" stroke="#a8a8a8" stroke-width="1.5"/><text x="1036.5" y="362.6" font-size="14.5" text-anchor="end" fill="#d8d8d8" font-weight="normal" >5</text><line x1="1040.5" y1="404.2" x2="1188.5" y2="404.2" stroke="#9a9a9a" stroke-width="1.5"/><line x1="1033.5" y1="404.2" x2="1040.5" y2="404.2" stroke="#a8a8a8" stroke-width="1.5"/><text x="1036.5" y="410.2" font-size="14.5" text-anchor="end" fill="#d8d8d8" font-weight="normal" >0</text><line x1="1040.5" y1="451.9" x2="1188.5" y2="451.9" stroke="#9a9a9a" stroke-width="1.5"/><line x1="1033.5" y1="451.9" x2="1040.5" y2="451.9" stroke="#a8a8a8" stroke-width="1.5"/><text x="1036.5" y="457.9" font-size="14.5" text-anchor="end" fill="#d8d8d8" font-weight="normal" >-5</text><line x1="1040.5" y1="499.6" x2="1188.5" y2="499.6" stroke="#9a9a9a" stroke-width="1.5"/><line x1="1033.5" y1="499.6" x2="1040.5" y2="499.6" stroke="#a8a8a8" stroke-width="1.5"/><text x="1036.5" y="505.6" font-size="14.5" text-anchor="end" fill="#d8d8d8" font-weight="normal" >-10</text><line x1="1033.5" y1="547.2" x2="1040.5" y2="547.2" stroke="#a8a8a8" stroke-width="1.5"/><text x="1036.5" y="553.2" font-size="14.5" text-anchor="end" fill="#d8d8d8" font-weight="normal" >-15</text><line x1="1040.5" y1="547.2" x2="1040.5" y2="553.2" stroke="#a8a8a8" stroke-width="1.5"/><line x1="1188.5" y1="547.2" x2="1188.5" y2="553.2" stroke="#a8a8a8" stroke-width="1.5"/><text x="1114.0" y="564" font-size="14.5" text-anchor="middle" fill="#d8d8d8" font-weight="normal" >100%</text><text x="1100.5" y="256" font-size="14.5" text-anchor="middle" fill="#d8d8d8" font-weight="normal" >Delta H</text><rect x="654" y="401.5" width="118" height="3.2" fill="#000"/><rect x="855.5" y="405" width="115.5" height="41" fill="url(#ybar)" stroke="#000" stroke-width="1.5"/><rect x="1055.8" y="378.3" width="115.6" height="26.7" fill="url(#ybar2)" stroke="#000" stroke-width="1.5"/><rect x="587.7" y="793.3" width="254.0" height="182.7" fill="#232323" stroke="#a8a8a8" stroke-width="2"/><line x1="580.7" y1="793.3" x2="587.7" y2="793.3" stroke="#a8a8a8" stroke-width="1.5"/><text x="583.7" y="798.3" font-size="14" text-anchor="end" fill="#d8d8d8" font-weight="normal" >110</text><line x1="587.7" y1="839.0" x2="841.7" y2="839.0" stroke="#9a9a9a" stroke-width="1.5"/><line x1="580.7" y1="839.0" x2="587.7" y2="839.0" stroke="#a8a8a8" stroke-width="1.5"/><text x="583.7" y="844.0" font-size="14" text-anchor="end" fill="#d8d8d8" font-weight="normal" >105</text><line x1="587.7" y1="884.6" x2="841.7" y2="884.6" stroke="#9a9a9a" stroke-width="1.5"/><line x1="580.7" y1="884.6" x2="587.7" y2="884.6" stroke="#a8a8a8" stroke-width="1.5"/><text x="583.7" y="889.6" font-size="14" text-anchor="end" fill="#d8d8d8" font-weight="normal" >100</text><line x1="587.7" y1="930.3" x2="841.7" y2="930.3" stroke="#9a9a9a" stroke-width="1.5"/><line x1="580.7" y1="930.3" x2="587.7" y2="930.3" stroke="#a8a8a8" stroke-width="1.5"/><text x="583.7" y="935.3" font-size="14" text-anchor="end" fill="#d8d8d8" font-weight="normal" >95</text><line x1="580.7" y1="976.0" x2="587.7" y2="976.0" stroke="#a8a8a8" stroke-width="1.5"/><text x="583.7" y="981.0" font-size="14" text-anchor="end" fill="#d8d8d8" font-weight="normal" >90</text><line x1="587.7" y1="976" x2="587.7" y2="982" stroke="#a8a8a8" stroke-width="1.5"/><line x1="841.7" y1="976" x2="841.7" y2="982" stroke="#a8a8a8" stroke-width="1.5"/><text x="699" y="787" font-size="14" text-anchor="middle" fill="#d8d8d8" font-weight="normal" >RGB Balance</text><text x="715" y="992" font-size="14" text-anchor="middle" fill="#d8d8d8" font-weight="normal" >100%</text><rect x="613.3" y="894" width="65" height="82" fill="url(#rr)" stroke="#000" stroke-width="1.5"/><rect x="678.3" y="881.7" width="68.4" height="94.3" fill="url(#rg)" stroke="#000" stroke-width="1.5"/><rect x="746.7" y="834" width="67.6" height="142" fill="url(#rb)" stroke="#000" stroke-width="1.5"/></svg>
<div class="a" style="left:232px;top:187px;font-size:40px;color:#f2f2f2;white-space:nowrap">Saturation Sweeps</div>
<div class="a" style="left:350px;top:260px;font-size:20px;color:#f2f2f2;white-space:nowrap">dE Formula:</div>
<div class="a" style="left:469px;top:257px;width:136px;height:26px;background:linear-gradient(#6c6c6c,#4a4a4a);border:1px solid #3a3a3a"><div class="a" style="left:4px;top:5px;font-size:16px;color:#eee">2000</div><div class="a" style="left:118px;top:10px;border-left:5px solid transparent;border-right:5px solid transparent;border-top:6px solid #000"></div></div>
<div class="a" style="left:793px;top:199px;font-size:19.3px;color:#f2f2f2;white-space:nowrap">Levels:</div>
<div class="a" style="left:862px;top:195px;width:345px;height:26px;background:linear-gradient(#6c6c6c,#4a4a4a);border:1px solid #3a3a3a"><div class="a" style="left:4px;top:5px;font-size:15.6px;color:#eee;white-space:nowrap">20% Sweeps</div><div class="a" style="left:327px;top:10px;border-left:5px solid transparent;border-right:5px solid transparent;border-top:6px solid #000"></div></div>
<div class="a" style="left:276px;top:759px;font-size:29.5px;color:#f2f2f2;white-space:nowrap">Avg dE2000: 2.37</div>
<div class="a" style="left:272px;top:800px;font-size:30px;color:#f2f2f2;white-space:nowrap">Max dE2000: 5.34</div>
<div class="a" style="left:240px;top:848px;font-size:30.2px;color:#f2f2f2;white-space:nowrap">Current Reading</div>
<div class="a" style="left:240px;top:889px;font-size:25px;color:#f2f2f2;white-space:nowrap">x: 0.431</div>
<div class="a" style="left:399px;top:889px;font-size:25.5px;color:#f2f2f2;white-space:nowrap">y: 0.5354</div>
<div class="a" style="left:240px;top:930px;font-size:25px;color:#f2f2f2;white-space:nowrap">fL: 66.18</div>
<div class="a" style="left:240px;top:963px;font-size:26.5px;color:#f2f2f2;white-space:nowrap">cd/m²: 226.75</div>
<div class="a" style="left:606px;top:574px;width:601px;height:165px;background:#000"></div>
<div class="a" style="left:627.0px;top:581px;width:101px;height:135px;border:1px solid #e8e8e8;background:linear-gradient(#bfc2a0 50%,#c0bf99 50%)"></div>
<div class="a" style="left:627.0px;top:720px;width:101px;text-align:center;font-size:12px;color:#f0f0f0">20%</div>
<div class="a" style="left:744.6px;top:581px;width:101px;height:135px;border:1px solid #e8e8e8;background:linear-gradient(#bec383 50%,#c1bf83 50%)"></div>
<div class="a" style="left:744.6px;top:720px;width:101px;text-align:center;font-size:12px;color:#f0f0f0">40%</div>
<div class="a" style="left:862.2px;top:581px;width:101px;height:135px;border:1px solid #e8e8e8;background:linear-gradient(#c0c466 50%,#c3c062 50%)"></div>
<div class="a" style="left:862.2px;top:720px;width:101px;text-align:center;font-size:12px;color:#f0f0f0">60%</div>
<div class="a" style="left:979.8px;top:581px;width:101px;height:135px;border:1px solid #e8e8e8;background:linear-gradient(#bfc033 50%,#c2be30 50%)"></div>
<div class="a" style="left:979.8px;top:720px;width:101px;text-align:center;font-size:12px;color:#f0f0f0">80%</div>
<div class="a" style="left:1097.4px;top:581px;width:101px;height:135px;border:1px solid #e8e8e8;background:linear-gradient(#c5c823 50%,#c8c800 50%)"></div>
<div class="a" style="left:1097.4px;top:720px;width:101px;text-align:center;font-size:12px;color:#f0f0f0">100%</div>
<div class="a" style="left:606px;top:603px;width:20px;height:16px;transform:rotate(-90deg);font-size:12.5px;color:#f0f0f0;text-align:center;line-height:16px;transform-origin:50% 50%"><span style="position:absolute;left:-10px;width:40px">Actual</span></div>
<div class="a" style="left:606px;top:678px;width:20px;height:16px;transform:rotate(-90deg);font-size:12.5px;color:#f0f0f0;text-align:center;line-height:16px;transform-origin:50% 50%"><span style="position:absolute;left:-10px;width:40px">Target</span></div>
<div class="a" style="left:1214px;top:188px;width:706px;height:565px;background:#1c1c1c"></div>
<div class="a" style="left:1221px;top:194px;width:691px;height:553px;background:#333"></div>
<div class="a" style="left:1258px;top:217px;width:652px;height:502px;background:#232323;border:2px solid #a8a8a8"></div>
<div class="a" style="left:1259px;top:218px;width:649px;height:499px;overflow:hidden">
<div class="a" style="left:0;top:0;width:700px;height:500px;clip-path:path('M277.4 486.0 L276.2 486.6 L272.4 485.8 L265.9 481.0 L253.5 470.8 L233.4 454.2 L219.7 442.8 L202.8 427.6 L182.6 407.0 L155.8 374.6 L124.1 330.4 L89.7 275.3 L56.6 215.7 L30.7 158.5 L13.1 110.3 L4.0 74.5 L1.9 49.5 L5.3 32.4 L13.6 21.5 L25.2 15.9 L39.2 13.9 L54.3 13.4 L69.7 13.6 L85.8 14.3 L103.1 15.6 L121.9 17.3 L142.6 19.4 L165.5 21.8 L190.8 24.6 L218.9 27.8 L249.7 31.3 L283.4 35.2 L319.6 39.4 L358.0 43.8 L397.4 48.3 L435.6 52.7 L506.5 60.8 L561.7 67.2 L600.8 71.6 L629.4 74.9 L648.2 77.1 L659.4 78.4 L669.2 79.5 L672.9 79.9 Z')">
<div class="a" style="left:0;top:0;width:700px;height:500px;background:linear-gradient(#009c00 10px,#009a10 100px,#009040 125px,#009088 133px,#007a90 155px,#005a90 174px,#004090 203px,#0028a0 247px,#0018a0 283px,#0008a0 338px,#0000a0 412px)"></div>
<div class="a" style="left:0;top:0;width:700px;height:500px;clip-path:polygon(189.6px 368.9px,997.6px -342.1px,1297.6px 57.9px,772.4px 876.7px,372.4px 576.7px);background:linear-gradient(48.7deg,#0800a0 26.7%,#1a00a0 31%,#2800a0 34.6%,#5000a0 45.4%,#9000a0 55.2%,#980080 61.7%,#9a0040 70%,#9a0010 78%,#9a0000 100%)"></div>
<div class="a" style="left:0;top:0;width:700px;height:500px;clip-path:polygon(-193.3px -9.4px,835.9px 94.5px,835.9px -50px,-193.3px -50px);background:conic-gradient(from 0deg at 213.7px 111.6px,#d8ff00 0deg,#ffff00 13deg,#ffc000 39.5deg,#ff8000 59deg,#ff4000 72deg,#ff0000 78.4deg,#ff0040 92deg,#ff00a0 103.7deg,#ff00ff 129.6deg,#a000ff 159deg,#4000ff 172.6deg,#0000ff 185.4deg,#0040ff 191deg,#0080ff 204deg,#00c0ff 229deg,#00ffff 257.7deg,#00ff80 295.6deg,#00ff00 310.3deg,#40ff00 330deg,#a0ff00 350deg,#d8ff00 360deg);filter:brightness(0.68)"></div>
<div class="a" style="left:0;top:0;width:700px;height:500px;clip-path:polygon(535.9px 64.2px,106.7px 20.9px,189.6px 368.9px);background:radial-gradient(circle at 213.7px 111.6px,rgba(255,255,255,0.9) 0px,rgba(255,255,255,0.4) 40px,rgba(255,255,255,0.1) 100px,rgba(255,255,255,0) 160px),conic-gradient(from 0deg at 213.7px 111.6px,#d8ff00 0deg,#ffff00 13deg,#ffc000 39.5deg,#ff8000 59deg,#ff4000 72deg,#ff0000 78.4deg,#ff0040 92deg,#ff00a0 103.7deg,#ff00ff 129.6deg,#a000ff 159deg,#4000ff 172.6deg,#0000ff 185.4deg,#0040ff 191deg,#0080ff 204deg,#00c0ff 229deg,#00ffff 257.7deg,#00ff80 295.6deg,#00ff00 310.3deg,#40ff00 330deg,#a0ff00 350deg,#d8ff00 360deg)"></div>
<div class="a" style="left:0;top:0;width:700px;height:500px;clip-path:polygon(213.0px 112.0px,536.7px 64.2px,105.9px 20.7px);background:linear-gradient(5.76deg,rgba(255,255,255,1.0) 407.9px,rgba(255,255,255,0.85) 412.7px,rgba(255,255,255,0.62) 419.8px,rgba(255,255,255,0.38) 431.7px,rgba(255,255,255,0.17) 447.6px,rgba(255,255,255,0.06) 463.5px,rgba(255,255,255,0.015) 475.5px,rgba(255,255,255,0) 487.4px),conic-gradient(from 0deg at 213.7px 111.6px,#d8ff00 0deg,#ffff00 13deg,#ffc000 39.5deg,#ff8000 59deg,#ff4000 72deg,#ff0000 78.4deg,#ff0040 92deg,#ff00a0 103.7deg,#ff00ff 129.6deg,#a000ff 159deg,#4000ff 172.6deg,#0000ff 185.4deg,#0040ff 191deg,#0080ff 204deg,#00c0ff 229deg,#00ffff 257.7deg,#00ff80 295.6deg,#00ff00 310.3deg,#40ff00 330deg,#a0ff00 350deg,#d8ff00 360deg)"></div>
<div class="a" style="left:0;top:0;width:700px;height:500px;clip-path:polygon(214.2px 111.0px,106.4px 20.2px,189.7px 369.7px);background:linear-gradient(-103.40deg,rgba(255,255,255,1.0) 498.9px,rgba(255,255,255,0.85) 503.9px,rgba(255,255,255,0.62) 511.4px,rgba(255,255,255,0.38) 523.8px,rgba(255,255,255,0.17) 540.5px,rgba(255,255,255,0.06) 557.1px,rgba(255,255,255,0.015) 569.5px,rgba(255,255,255,0) 582.0px),conic-gradient(from 0deg at 213.7px 111.6px,#d8ff00 0deg,#ffff00 13deg,#ffc000 39.5deg,#ff8000 59deg,#ff4000 72deg,#ff0000 78.4deg,#ff0040 92deg,#ff00a0 103.7deg,#ff00ff 129.6deg,#a000ff 159deg,#4000ff 172.6deg,#0000ff 185.4deg,#0040ff 191deg,#0080ff 204deg,#00c0ff 229deg,#00ffff 257.7deg,#00ff80 295.6deg,#00ff00 310.3deg,#40ff00 330deg,#a0ff00 350deg,#d8ff00 360deg)"></div>
<div class="a" style="left:0;top:0;width:700px;height:500px;clip-path:polygon(213.0px 111.1px,189.2px 369.6px,536.6px 63.8px);background:linear-gradient(138.66deg,rgba(255,255,255,1.0) 224.9px,rgba(255,255,255,0.85) 235.6px,rgba(255,255,255,0.62) 251.5px,rgba(255,255,255,0.38) 278.1px,rgba(255,255,255,0.17) 313.6px,rgba(255,255,255,0.06) 349.0px,rgba(255,255,255,0.015) 375.6px,rgba(255,255,255,0) 402.2px),conic-gradient(from 0deg at 213.7px 111.6px,#d8ff00 0deg,#ffff00 13deg,#ffc000 39.5deg,#ff8000 59deg,#ff4000 72deg,#ff0000 78.4deg,#ff0040 92deg,#ff00a0 103.7deg,#ff00ff 129.6deg,#a000ff 159deg,#4000ff 172.6deg,#0000ff 185.4deg,#0040ff 191deg,#0080ff 204deg,#00c0ff 229deg,#00ffff 257.7deg,#00ff80 295.6deg,#00ff00 310.3deg,#40ff00 330deg,#a0ff00 350deg,#d8ff00 360deg)"></div>
</div></div>
<svg class="a" style="left:0;top:0;font-family:'Liberation Sans',sans-serif" width="1920" height="1146" viewBox="0 0 1920 1146"><rect x="1358.4" y="228.7" width="14" height="14" fill="none" stroke="#f4f4f4" stroke-width="1.6"/><rect x="1372.5" y="239.8" width="14" height="14" fill="none" stroke="#f4f4f4" stroke-width="1.6"/><rect x="1387.7" y="253.0" width="14" height="14" fill="none" stroke="#f4f4f4" stroke-width="1.6"/><rect x="1408.0" y="270.7" width="14" height="14" fill="none" stroke="#f4f4f4" stroke-width="1.6"/><rect x="1433.3" y="292.4" width="14" height="14" fill="none" stroke="#f4f4f4" stroke-width="1.6"/><rect x="1472.7" y="238.8" width="14" height="14" fill="none" stroke="#f4f4f4" stroke-width="1.6"/><rect x="1471.2" y="253.0" width="14" height="14" fill="none" stroke="#f4f4f4" stroke-width="1.6"/><rect x="1469.7" y="267.6" width="14" height="14" fill="none" stroke="#f4f4f4" stroke-width="1.6"/><rect x="1468.2" y="282.3" width="14" height="14" fill="none" stroke="#f4f4f4" stroke-width="1.6"/><rect x="1466.7" y="298.5" width="14" height="14" fill="none" stroke="#f4f4f4" stroke-width="1.6"/><rect x="1381.6" y="332.9" width="14" height="14" fill="none" stroke="#f4f4f4" stroke-width="1.6"/><rect x="1399.4" y="328.9" width="14" height="14" fill="none" stroke="#f4f4f4" stroke-width="1.6"/><rect x="1415.5" y="325.8" width="14" height="14" fill="none" stroke="#f4f4f4" stroke-width="1.6"/><rect x="1432.3" y="324.3" width="14" height="14" fill="none" stroke="#f4f4f4" stroke-width="1.6"/><rect x="1449.0" y="322.3" width="14" height="14" fill="none" stroke="#f4f4f4" stroke-width="1.6"/><rect x="1788.5" y="270.7" width="14" height="14" fill="none" stroke="#f4f4f4" stroke-width="1.6"/><rect x="1716.7" y="281.8" width="14" height="14" fill="none" stroke="#f4f4f4" stroke-width="1.6"/><rect x="1650.4" y="291.9" width="14" height="14" fill="none" stroke="#f4f4f4" stroke-width="1.6"/><rect x="1581.0" y="303.0" width="14" height="14" fill="none" stroke="#f4f4f4" stroke-width="1.6"/><rect x="1520.8" y="310.7" width="14" height="14" fill="none" stroke="#f4f4f4" stroke-width="1.6"/><rect x="1602.8" y="436.2" width="14" height="14" fill="none" stroke="#f4f4f4" stroke-width="1.6"/><rect x="1564.3" y="403.8" width="14" height="14" fill="none" stroke="#f4f4f4" stroke-width="1.6"/><rect x="1534.0" y="378.0" width="14" height="14" fill="none" stroke="#f4f4f4" stroke-width="1.6"/><rect x="1506.6" y="353.7" width="14" height="14" fill="none" stroke="#f4f4f4" stroke-width="1.6"/><rect x="1484.4" y="335.0" width="14" height="14" fill="none" stroke="#f4f4f4" stroke-width="1.6"/><rect x="1441.9" y="577.9" width="14" height="14" fill="none" stroke="#f4f4f4" stroke-width="1.6"/><rect x="1447.9" y="498.4" width="14" height="14" fill="none" stroke="#f4f4f4" stroke-width="1.6"/><rect x="1454.5" y="435.7" width="14" height="14" fill="none" stroke="#f4f4f4" stroke-width="1.6"/><rect x="1459.1" y="388.6" width="14" height="14" fill="none" stroke="#f4f4f4" stroke-width="1.6"/><rect x="1461.1" y="350.1" width="14" height="14" fill="none" stroke="#f4f4f4" stroke-width="1.6"/><circle cx="1340.0" cy="234.2" r="4.4" fill="#00a000" stroke="#1a1a1a" stroke-width="1.4"/><circle cx="1359.8" cy="247.8" r="4.4" fill="#3aa03a" stroke="#1a1a1a" stroke-width="1.4"/><circle cx="1382.6" cy="265.0" r="4.4" fill="#5aa05a" stroke="#1a1a1a" stroke-width="1.4"/><circle cx="1408.9" cy="282.7" r="4.4" fill="#78a078" stroke="#1a1a1a" stroke-width="1.4"/><circle cx="1436.7" cy="303.0" r="4.4" fill="#90a090" stroke="#1a1a1a" stroke-width="1.4"/><circle cx="1476.7" cy="247.8" r="4.4" fill="#b0b000" stroke="#1a1a1a" stroke-width="1.4"/><circle cx="1474.7" cy="261.5" r="4.4" fill="#b0b040" stroke="#1a1a1a" stroke-width="1.4"/><circle cx="1473.2" cy="274.6" r="4.4" fill="#b0b060" stroke="#1a1a1a" stroke-width="1.4"/><circle cx="1472.1" cy="289.3" r="4.4" fill="#b0b080" stroke="#1a1a1a" stroke-width="1.4"/><circle cx="1471.1" cy="307.5" r="4.4" fill="#b0b098" stroke="#1a1a1a" stroke-width="1.4"/><circle cx="1369.4" cy="338.9" r="4.4" fill="#00a0a0" stroke="#1a1a1a" stroke-width="1.4"/><circle cx="1390.7" cy="336.4" r="4.4" fill="#40a0a0" stroke="#1a1a1a" stroke-width="1.4"/><circle cx="1410.4" cy="333.8" r="4.4" fill="#60a0a0" stroke="#1a1a1a" stroke-width="1.4"/><circle cx="1430.1" cy="330.8" r="4.4" fill="#80a0a0" stroke="#1a1a1a" stroke-width="1.4"/><circle cx="1448.9" cy="328.3" r="4.4" fill="#98a8a8" stroke="#1a1a1a" stroke-width="1.4"/><circle cx="1813.7" cy="283.2" r="4.4" fill="#c00000" stroke="#1a1a1a" stroke-width="1.4"/><circle cx="1747.5" cy="289.8" r="4.4" fill="#a04848" stroke="#1a1a1a" stroke-width="1.4"/><circle cx="1675.1" cy="299.4" r="4.4" fill="#a06060" stroke="#1a1a1a" stroke-width="1.4"/><circle cx="1607.8" cy="306.0" r="4.4" fill="#a07878" stroke="#1a1a1a" stroke-width="1.4"/><circle cx="1534.4" cy="316.1" r="4.4" fill="#a08888" stroke="#1a1a1a" stroke-width="1.4"/><circle cx="1627.0" cy="439.1" r="4.4" fill="#b040b0" stroke="#1a1a1a" stroke-width="1.4"/><circle cx="1584.5" cy="408.2" r="4.4" fill="#a060a8" stroke="#1a1a1a" stroke-width="1.4"/><circle cx="1547.0" cy="380.4" r="4.4" fill="#a078a8" stroke="#1a1a1a" stroke-width="1.4"/><circle cx="1519.2" cy="361.7" r="4.4" fill="#a090a8" stroke="#1a1a1a" stroke-width="1.4"/><circle cx="1491.4" cy="342.0" r="4.4" fill="#a8a0a8" stroke="#1a1a1a" stroke-width="1.4"/><circle cx="1442.8" cy="591.4" r="4.4" fill="#2020a0" stroke="#1a1a1a" stroke-width="1.4"/><circle cx="1449.9" cy="508.4" r="4.4" fill="#5050a0" stroke="#1a1a1a" stroke-width="1.4"/><circle cx="1454.9" cy="442.7" r="4.4" fill="#7070a8" stroke="#1a1a1a" stroke-width="1.4"/><circle cx="1459.5" cy="395.1" r="4.4" fill="#8888b0" stroke="#1a1a1a" stroke-width="1.4"/><circle cx="1465.1" cy="357.1" r="4.4" fill="#a0a0b0" stroke="#1a1a1a" stroke-width="1.4"/><rect x="1464" y="319" width="15" height="15" fill="none" stroke="#000" stroke-width="2.2"/><circle cx="1471.6" cy="326.8" r="4.6" fill="#fff" stroke="#222" stroke-width="1.2"/><line x1="1259.3" y1="718" x2="1259.3" y2="724" stroke="#a8a8a8" stroke-width="1.5"/><text x="1259.3" y="739" font-size="14" text-anchor="middle" fill="#d8d8d8">0</text><line x1="1313.2" y1="718" x2="1313.2" y2="724" stroke="#a8a8a8" stroke-width="1.5"/><text x="1313.2" y="739" font-size="14" text-anchor="middle" fill="#d8d8d8">0.05</text><line x1="1367.2" y1="718" x2="1367.2" y2="724" stroke="#a8a8a8" stroke-width="1.5"/><text x="1367.2" y="739" font-size="14" text-anchor="middle" fill="#d8d8d8">0.1</text><line x1="1421.2" y1="718" x2="1421.2" y2="724" stroke="#a8a8a8" stroke-width="1.5"/><text x="1421.2" y="739" font-size="14" text-anchor="middle" fill="#d8d8d8">0.15</text><line x1="1475.1" y1="718" x2="1475.1" y2="724" stroke="#a8a8a8" stroke-width="1.5"/><text x="1475.1" y="739" font-size="14" text-anchor="middle" fill="#d8d8d8">0.2</text><line x1="1529.0" y1="718" x2="1529.0" y2="724" stroke="#a8a8a8" stroke-width="1.5"/><text x="1529.0" y="739" font-size="14" text-anchor="middle" fill="#d8d8d8">0.25</text><line x1="1583.0" y1="718" x2="1583.0" y2="724" stroke="#a8a8a8" stroke-width="1.5"/><text x="1583.0" y="739" font-size="14" text-anchor="middle" fill="#d8d8d8">0.3</text><line x1="1637.0" y1="718" x2="1637.0" y2="724" stroke="#a8a8a8" stroke-width="1.5"/><text x="1637.0" y="739" font-size="14" text-anchor="middle" fill="#d8d8d8">0.35</text><line x1="1690.9" y1="718" x2="1690.9" y2="724" stroke="#a8a8a8" stroke-width="1.5"/><text x="1690.9" y="739" font-size="14" text-anchor="middle" fill="#d8d8d8">0.4</text><line x1="1744.8" y1="718" x2="1744.8" y2="724" stroke="#a8a8a8" stroke-width="1.5"/><text x="1744.8" y="739" font-size="14" text-anchor="middle" fill="#d8d8d8">0.45</text><line x1="1798.8" y1="718" x2="1798.8" y2="724" stroke="#a8a8a8" stroke-width="1.5"/><text x="1798.8" y="739" font-size="14" text-anchor="middle" fill="#d8d8d8">0.5</text><line x1="1852.8" y1="718" x2="1852.8" y2="724" stroke="#a8a8a8" stroke-width="1.5"/><text x="1852.8" y="739" font-size="14" text-anchor="middle" fill="#d8d8d8">0.55</text><line x1="1252" y1="717.8" x2="1259" y2="717.8" stroke="#a8a8a8" stroke-width="1.5"/><text x="1252" y="722.8" font-size="14" text-anchor="end" fill="#d8d8d8">0</text><line x1="1252" y1="676.3" x2="1259" y2="676.3" stroke="#a8a8a8" stroke-width="1.5"/><text x="1252" y="681.3" font-size="14" text-anchor="end" fill="#d8d8d8">0.05</text><line x1="1252" y1="634.9" x2="1259" y2="634.9" stroke="#a8a8a8" stroke-width="1.5"/><text x="1252" y="639.9" font-size="14" text-anchor="end" fill="#d8d8d8">0.1</text><line x1="1252" y1="593.4" x2="1259" y2="593.4" stroke="#a8a8a8" stroke-width="1.5"/><text x="1252" y="598.4" font-size="14" text-anchor="end" fill="#d8d8d8">0.15</text><line x1="1252" y1="552.0" x2="1259" y2="552.0" stroke="#a8a8a8" stroke-width="1.5"/><text x="1252" y="557.0" font-size="14" text-anchor="end" fill="#d8d8d8">0.2</text><line x1="1252" y1="510.5" x2="1259" y2="510.5" stroke="#a8a8a8" stroke-width="1.5"/><text x="1252" y="515.5" font-size="14" text-anchor="end" fill="#d8d8d8">0.25</text><line x1="1252" y1="469.1" x2="1259" y2="469.1" stroke="#a8a8a8" stroke-width="1.5"/><text x="1252" y="474.1" font-size="14" text-anchor="end" fill="#d8d8d8">0.3</text><line x1="1252" y1="427.6" x2="1259" y2="427.6" stroke="#a8a8a8" stroke-width="1.5"/><text x="1252" y="432.6" font-size="14" text-anchor="end" fill="#d8d8d8">0.35</text><line x1="1252" y1="386.2" x2="1259" y2="386.2" stroke="#a8a8a8" stroke-width="1.5"/><text x="1252" y="391.2" font-size="14" text-anchor="end" fill="#d8d8d8">0.4</text><line x1="1252" y1="344.7" x2="1259" y2="344.7" stroke="#a8a8a8" stroke-width="1.5"/><text x="1252" y="349.7" font-size="14" text-anchor="end" fill="#d8d8d8">0.45</text><line x1="1252" y1="303.3" x2="1259" y2="303.3" stroke="#a8a8a8" stroke-width="1.5"/><text x="1252" y="308.3" font-size="14" text-anchor="end" fill="#d8d8d8">0.5</text><line x1="1252" y1="261.8" x2="1259" y2="261.8" stroke="#a8a8a8" stroke-width="1.5"/><text x="1252" y="266.8" font-size="14" text-anchor="end" fill="#d8d8d8">0.55</text><text x="1566.5" y="213" font-size="14.6" text-anchor="middle" fill="#d8d8d8">CIE 1976 u'v'</text></svg>
<div class="a" style="left:1686px;top:562px;width:217px;height:148px;background:#2a2a2a;border:2px solid #8a8a8a;overflow:hidden"><div class="a" style="left:0;top:0;width:213px;height:144px;background:linear-gradient(150deg,#b8ff00 0%,#e0ff00 30%,#ffff00 55%,#ffd000 85%,#ffb000 100%)"></div><div class="a" style="left:0;top:0;width:213px;height:144px;clip-path:polygon(0 0,213px 0,213px 136px,0 8px);background:linear-gradient(160deg,#78a000 0%,#889800 40%,#988800 70%,#a07800 100%)"></div><div class="a" style="left:0;top:0;width:213px;height:144px;clip-path:polygon(107px 0,213px 0,213px 73px);background:#232323"></div></div>
<svg class="a" style="left:0;top:0" width="1920" height="1146"><circle cx="1765" cy="637" r="5" fill="rgba(150,150,0,0.55)" stroke="#222" stroke-width="1.4"/><rect x="1787.5" y="627.5" width="15" height="15" fill="none" stroke="#fff" stroke-width="1.8"/></svg>
<div class="a" style="left:862px;top:760px;width:1050px;height:2px;background:repeating-linear-gradient(90deg,#c4c4c4 0 2px,transparent 2px 4px)"></div>
<div class="a" style="left:862px;top:1000px;width:1050px;height:2px;background:repeating-linear-gradient(90deg,#c4c4c4 0 2px,transparent 2px 4px)"></div>
<div class="a" style="left:862px;top:760px;width:2px;height:242px;background:repeating-linear-gradient(180deg,#c4c4c4 0 2px,transparent 2px 4px)"></div>
<div class="a" style="left:1910px;top:760px;width:2px;height:242px;background:repeating-linear-gradient(180deg,#c4c4c4 0 2px,transparent 2px 4px)"></div>
<div class="a" style="left:864px;top:762px;width:737px;height:14px;background:#303030"></div>
<div class="a" style="left:864px;top:776px;width:737px;height:14px;background:#141414"></div>
<div class="a" style="left:1601px;top:762px;width:2px;height:239px;background:#0a0a0a"></div>
<div class="a" style="left:864px;top:790.0px;width:737px;height:26.6px;background:#404040"></div>
<div style="position:absolute;white-space:nowrap;transform:scaleX(1.4);transform-origin:0 0;color:#f2f2f2;left:882px;top:795.5px;font-size:16px;font-weight:bold">x: CIE31</div>
<div style="position:absolute;white-space:nowrap;transform:scaleX(1.4);transform-origin:0 0;color:#f2f2f2;left:1067.4px;top:795.5px;font-size:16px">0.3318</div>
<div style="position:absolute;white-space:nowrap;transform:scaleX(1.4);transform-origin:0 0;color:#f2f2f2;left:1175px;top:795.5px;font-size:16px">0.3560</div>
<div style="position:absolute;white-space:nowrap;transform:scaleX(1.4);transform-origin:0 0;color:#f2f2f2;left:1283.7px;top:795.5px;font-size:16px">0.3808</div>
<div style="position:absolute;white-space:nowrap;transform:scaleX(1.4);transform-origin:0 0;color:#f2f2f2;left:1391.3px;top:795.5px;font-size:16px">0.4044</div>
<div style="position:absolute;white-space:nowrap;transform:scaleX(1.4);transform-origin:0 0;color:#f2f2f2;left:1499.4px;top:795.5px;font-size:16px">0.4310</div>
<div class="a" style="left:864px;top:816.3px;width:737px;height:26.6px;background:#838383"></div>
<div style="position:absolute;white-space:nowrap;transform:scaleX(1.4);transform-origin:0 0;color:#f2f2f2;left:882px;top:821.8px;font-size:16px;font-weight:bold">y: CIE31</div>
<div style="position:absolute;white-space:nowrap;transform:scaleX(1.4);transform-origin:0 0;color:#f2f2f2;left:1067.4px;top:821.8px;font-size:16px">0.3701</div>
<div style="position:absolute;white-space:nowrap;transform:scaleX(1.4);transform-origin:0 0;color:#f2f2f2;left:1175px;top:821.8px;font-size:16px">0.4104</div>
<div style="position:absolute;white-space:nowrap;transform:scaleX(1.4);transform-origin:0 0;color:#f2f2f2;left:1283.7px;top:821.8px;font-size:16px">0.4518</div>
<div style="position:absolute;white-space:nowrap;transform:scaleX(1.4);transform-origin:0 0;color:#f2f2f2;left:1391.3px;top:821.8px;font-size:16px">0.4911</div>
<div style="position:absolute;white-space:nowrap;transform:scaleX(1.4);transform-origin:0 0;color:#f2f2f2;left:1499.4px;top:821.8px;font-size:16px">0.5354</div>
<div class="a" style="left:864px;top:842.6px;width:737px;height:26.6px;background:#404040"></div>
<div style="position:absolute;white-space:nowrap;transform:scaleX(1.4);transform-origin:0 0;color:#f2f2f2;left:882px;top:848.1px;font-size:16px;font-weight:bold">Y</div>
<div style="position:absolute;white-space:nowrap;transform:scaleX(1.4);transform-origin:0 0;color:#f2f2f2;left:1067.4px;top:848.1px;font-size:16px">239.5090</div>
<div style="position:absolute;white-space:nowrap;transform:scaleX(1.4);transform-origin:0 0;color:#f2f2f2;left:1175px;top:848.1px;font-size:16px">235.3575</div>
<div style="position:absolute;white-space:nowrap;transform:scaleX(1.4);transform-origin:0 0;color:#f2f2f2;left:1283.7px;top:848.1px;font-size:16px">232.0686</div>
<div style="position:absolute;white-space:nowrap;transform:scaleX(1.4);transform-origin:0 0;color:#f2f2f2;left:1391.3px;top:848.1px;font-size:16px">229.4636</div>
<div style="position:absolute;white-space:nowrap;transform:scaleX(1.4);transform-origin:0 0;color:#f2f2f2;left:1499.4px;top:848.1px;font-size:16px">226.7509</div>
<div class="a" style="left:864px;top:868.9px;width:737px;height:26.6px;background:#838383"></div>
<div style="position:absolute;white-space:nowrap;transform:scaleX(1.4);transform-origin:0 0;color:#f2f2f2;left:882px;top:874.4px;font-size:16px;font-weight:bold">Target x:CIE31</div>
<div style="position:absolute;white-space:nowrap;transform:scaleX(1.4);transform-origin:0 0;color:#f2f2f2;left:1067.4px;top:874.4px;font-size:16px">0.3384</div>
<div style="position:absolute;white-space:nowrap;transform:scaleX(1.4);transform-origin:0 0;color:#f2f2f2;left:1175px;top:874.4px;font-size:16px">0.3619</div>
<div style="position:absolute;white-space:nowrap;transform:scaleX(1.4);transform-origin:0 0;color:#f2f2f2;left:1283.7px;top:874.4px;font-size:16px">0.3869</div>
<div style="position:absolute;white-space:nowrap;transform:scaleX(1.4);transform-origin:0 0;color:#f2f2f2;left:1391.3px;top:874.4px;font-size:16px">0.4128</div>
<div style="position:absolute;white-space:nowrap;transform:scaleX(1.4);transform-origin:0 0;color:#f2f2f2;left:1499.4px;top:874.4px;font-size:16px">0.4378</div>
<div class="a" style="left:864px;top:895.2px;width:737px;height:26.6px;background:#404040"></div>
<div style="position:absolute;white-space:nowrap;transform:scaleX(1.4);transform-origin:0 0;color:#f2f2f2;left:882px;top:900.8px;font-size:16px;font-weight:bold">Target y:CIE31</div>
<div style="position:absolute;white-space:nowrap;transform:scaleX(1.4);transform-origin:0 0;color:#f2f2f2;left:1067.4px;top:900.8px;font-size:16px">0.3714</div>
<div style="position:absolute;white-space:nowrap;transform:scaleX(1.4);transform-origin:0 0;color:#f2f2f2;left:1175px;top:900.8px;font-size:16px">0.4103</div>
<div style="position:absolute;white-space:nowrap;transform:scaleX(1.4);transform-origin:0 0;color:#f2f2f2;left:1283.7px;top:900.8px;font-size:16px">0.4517</div>
<div style="position:absolute;white-space:nowrap;transform:scaleX(1.4);transform-origin:0 0;color:#f2f2f2;left:1391.3px;top:900.8px;font-size:16px">0.4944</div>
<div style="position:absolute;white-space:nowrap;transform:scaleX(1.4);transform-origin:0 0;color:#f2f2f2;left:1499.4px;top:900.8px;font-size:16px">0.5359</div>
<div class="a" style="left:864px;top:921.6px;width:737px;height:26.6px;background:#838383"></div>
<div style="position:absolute;white-space:nowrap;transform:scaleX(1.4);transform-origin:0 0;color:#f2f2f2;left:882px;top:927.1px;font-size:16px;font-weight:bold">Target Y</div>
<div style="position:absolute;white-space:nowrap;transform:scaleX(1.4);transform-origin:0 0;color:#f2f2f2;left:1067.4px;top:927.1px;font-size:16px">238.9880</div>
<div style="position:absolute;white-space:nowrap;transform:scaleX(1.4);transform-origin:0 0;color:#f2f2f2;left:1175px;top:927.1px;font-size:16px">234.7021</div>
<div style="position:absolute;white-space:nowrap;transform:scaleX(1.4);transform-origin:0 0;color:#f2f2f2;left:1283.7px;top:927.1px;font-size:16px">231.0768</div>
<div style="position:absolute;white-space:nowrap;transform:scaleX(1.4);transform-origin:0 0;color:#f2f2f2;left:1391.3px;top:927.1px;font-size:16px">228.0590</div>
<div style="position:absolute;white-space:nowrap;transform:scaleX(1.4);transform-origin:0 0;color:#f2f2f2;left:1499.4px;top:927.1px;font-size:16px">225.6463</div>
<div class="a" style="left:864px;top:947.9px;width:737px;height:26.6px;background:#404040"></div>
<div style="position:absolute;white-space:nowrap;transform:scaleX(1.4);transform-origin:0 0;color:#f2f2f2;left:882px;top:953.4px;font-size:16px;font-weight:bold">&Delta;E 2000</div>
<div style="position:absolute;white-space:nowrap;transform:scaleX(1.4);transform-origin:0 0;color:#f2f2f2;left:1067.4px;top:953.4px;font-size:16px">2.4659</div>
<div style="position:absolute;white-space:nowrap;transform:scaleX(1.4);transform-origin:0 0;color:#f2f2f2;left:1175px;top:953.4px;font-size:16px">1.6929</div>
<div style="position:absolute;white-space:nowrap;transform:scaleX(1.4);transform-origin:0 0;color:#f2f2f2;left:1283.7px;top:953.4px;font-size:16px">1.4571</div>
<div style="position:absolute;white-space:nowrap;transform:scaleX(1.4);transform-origin:0 0;color:#f2f2f2;left:1391.3px;top:953.4px;font-size:16px">1.6025</div>
<div style="position:absolute;white-space:nowrap;transform:scaleX(1.4);transform-origin:0 0;color:#f2f2f2;left:1499.4px;top:953.4px;font-size:16px">1.5088</div>
<div class="a" style="left:864px;top:974.2px;width:737px;height:26.6px;background:#838383"></div>
<div style="position:absolute;white-space:nowrap;transform:scaleX(1.4);transform-origin:0 0;color:#f2f2f2;left:882px;top:979.7px;font-size:16px;font-weight:bold">&Delta;E ITP</div>
<div style="position:absolute;white-space:nowrap;transform:scaleX(1.4);transform-origin:0 0;color:#f2f2f2;left:1067.4px;top:979.7px;font-size:16px">3.8575</div>
<div style="position:absolute;white-space:nowrap;transform:scaleX(1.4);transform-origin:0 0;color:#f2f2f2;left:1175px;top:979.7px;font-size:16px">3.4121</div>
<div style="position:absolute;white-space:nowrap;transform:scaleX(1.4);transform-origin:0 0;color:#f2f2f2;left:1283.7px;top:979.7px;font-size:16px">3.4116</div>
<div style="position:absolute;white-space:nowrap;transform:scaleX(1.4);transform-origin:0 0;color:#f2f2f2;left:1391.3px;top:979.7px;font-size:16px">5.5933</div>
<div style="position:absolute;white-space:nowrap;transform:scaleX(1.4);transform-origin:0 0;color:#f2f2f2;left:1499.4px;top:979.7px;font-size:16px">5.4900</div>
<div style="position:absolute;left:1055.4px;width:120px;text-align:center;top:769px;font-size:14px;font-weight:bold;color:#f2f2f2;transform:scaleX(1.45)">20%</div>
<div style="position:absolute;left:1162.4px;width:120px;text-align:center;top:769px;font-size:14px;font-weight:bold;color:#f2f2f2;transform:scaleX(1.45)">40%</div>
<div style="position:absolute;left:1270.5px;width:120px;text-align:center;top:769px;font-size:14px;font-weight:bold;color:#f2f2f2;transform:scaleX(1.45)">60%</div>
<div style="position:absolute;left:1379.2px;width:120px;text-align:center;top:769px;font-size:14px;font-weight:bold;color:#f2f2f2;transform:scaleX(1.45)">80%</div>
<div style="position:absolute;left:1486.8px;width:120px;text-align:center;top:769px;font-size:14px;font-weight:bold;color:#f2f2f2;transform:scaleX(1.45)">100%</div>
<div class="a" style="left:225px;top:1075px;width:1695px;height:71px;background:linear-gradient(#474747,#2a2a2a)"></div>
<div class="a" style="left:226px;top:1076px;width:51px;height:70px;border-radius:4px 4px 0 0;background:linear-gradient(#8c8c8c,#5e5e5e)"><div class="a" style="left:15px;top:2px;width:20px;height:20px;border-radius:50%;background:radial-gradient(circle at 50% 30%,#777,#9a9a9a)"></div><div class="a" style="left:20px;top:7px;border-left:5px solid transparent;border-right:5px solid transparent;border-bottom:6px solid #222"></div><div class="a" style="left:7px;top:29px;width:38px;height:33px;border-radius:3px;background:#ffff00;box-shadow:0 0 0 1px #555"></div></div>
<div class="a" style="left:283.7px;top:1076px;width:169px;height:70px;border-radius:4px 4px 0 0;background:linear-gradient(#8e8e8e,#5c5c5c)"><div class="a" style="left:6px;top:6px;width:157px;height:40px;border-radius:3px;background:#c0c29f;box-shadow:0 1px 0 #555 inset, 0 0 0 1px #777"></div><div class="a" style="left:0;width:169px;top:54px;text-align:center;font-size:11.5px;font-weight:bold;color:#3a3a3a">20%</div></div>
<div class="a" style="left:454.6px;top:1076px;width:169px;height:70px;border-radius:4px 4px 0 0;background:linear-gradient(#8e8e8e,#5c5c5c)"><div class="a" style="left:6px;top:6px;width:157px;height:40px;border-radius:3px;background:#c0c384;box-shadow:0 1px 0 #555 inset, 0 0 0 1px #777"></div><div class="a" style="left:0;width:169px;top:54px;text-align:center;font-size:11.5px;font-weight:bold;color:#3a3a3a">40%</div></div>
<div class="a" style="left:625.5px;top:1076px;width:169px;height:70px;border-radius:4px 4px 0 0;background:linear-gradient(#8e8e8e,#5c5c5c)"><div class="a" style="left:6px;top:6px;width:157px;height:40px;border-radius:3px;background:#c2c466;box-shadow:0 1px 0 #555 inset, 0 0 0 1px #777"></div><div class="a" style="left:0;width:169px;top:54px;text-align:center;font-size:11.5px;font-weight:bold;color:#3a3a3a">60%</div></div>
<div class="a" style="left:796.4px;top:1076px;width:169px;height:70px;border-radius:4px 4px 0 0;background:linear-gradient(#8e8e8e,#5c5c5c)"><div class="a" style="left:6px;top:6px;width:157px;height:40px;border-radius:3px;background:#c3c246;box-shadow:0 1px 0 #555 inset, 0 0 0 1px #777"></div><div class="a" style="left:0;width:169px;top:54px;text-align:center;font-size:11.5px;font-weight:bold;color:#3a3a3a">80%</div></div>
<div class="a" style="left:967.3px;top:1076px;width:169px;height:70px;border-radius:4px 4px 0 0;background:linear-gradient(#1c1c1c,#2a2a2a)"><div class="a" style="left:6px;top:6px;width:157px;height:40px;border-radius:3px;background:#c4c400;box-shadow:0 1px 0 #555 inset, 0 0 0 1px #777"></div><div class="a" style="left:0;width:169px;top:54px;text-align:center;font-size:11.5px;font-weight:bold;color:#fff">100%</div></div>
<div class="a" style="left:1557px;top:1076px;width:54px;height:70px;border-radius:4px 4px 0 0;background:linear-gradient(#8e8e8e,#6a6a6a)"><div class="a" style="left:0;top:20px;width:54px;height:2px;background:#555"></div><div class="a" style="left:16px;top:1px;width:22px;height:18px;border-radius:50%;background:radial-gradient(circle at 50% 30%,#6a6a6a,#999)"></div><div class="a" style="left:22px;top:7px;border-left:5px solid transparent;border-right:5px solid transparent;border-bottom:6px solid #222"></div><div class="a" style="left:9px;top:27px;width:35px;height:35px;border-radius:5px;border:3px solid #1a1a1a;background:linear-gradient(#a8a8a8 50%,#8a8a8a 50%)"></div><div class="a" style="left:19px;top:37px;width:15px;height:15px;background:#000"></div></div>
<div class="a" style="left:1612px;top:1076px;width:308px;height:70px;background:linear-gradient(#8c8c8c,#6c6c6c)"></div>
<div class="a" style="left:1663.7px;top:1076px;width:1px;height:35px;background:#5a5a5a"></div>
<div class="a" style="left:1714.7px;top:1076px;width:1px;height:35px;background:#5a5a5a"></div>
<div class="a" style="left:1765.4px;top:1076px;width:1px;height:35px;background:#5a5a5a"></div>
<div class="a" style="left:1815.9px;top:1076px;width:1px;height:35px;background:#5a5a5a"></div>
<div class="a" style="left:1866.6px;top:1076px;width:1px;height:35px;background:#5a5a5a"></div>
<div class="a" style="left:1627px;top:1082px;width:22px;height:22px;border-radius:50%;background:radial-gradient(circle at 50% 40%,#6e6e6e,#8a8a8a)"></div>
<div class="a" style="left:1678px;top:1082px;width:22px;height:22px;border-radius:50%;background:radial-gradient(circle at 50% 40%,#6e6e6e,#8a8a8a)"></div>
<div class="a" style="left:1729px;top:1082px;width:22px;height:22px;border-radius:50%;background:radial-gradient(circle at 50% 40%,#6e6e6e,#8a8a8a)"></div>
<div class="a" style="left:1780px;top:1082px;width:22px;height:22px;border-radius:50%;background:radial-gradient(circle at 50% 40%,#6e6e6e,#8a8a8a)"></div>
<div class="a" style="left:1830px;top:1082px;width:22px;height:22px;border-radius:50%;background:radial-gradient(circle at 50% 40%,#6e6e6e,#8a8a8a)"></div>
<div class="a" style="left:1882px;top:1082px;width:22px;height:22px;border-radius:50%;background:radial-gradient(circle at 50% 40%,#6e6e6e,#8a8a8a)"></div>
<div class="a" style="left:1612px;top:1110px;width:308px;height:1px;background:#5a5a5a"></div>
<div class="a" style="left:1765px;top:1111px;width:1px;height:35px;background:#5a5a5a"></div>
<div class="a" style="left:1612px;top:1111px;width:308px;height:35px;background:linear-gradient(#9a9a9a,#7a7a7a)"></div>
<div class="a" style="left:1765px;top:1111px;width:1px;height:35px;background:#5a5a5a"></div>
<div class="a" style="left:1676px;top:1112px;font-size:25px;color:#333">Back</div>
<div class="a" style="left:1796px;top:1112px;font-size:26.5px;color:#333">Next</div>
<div class="a" style="left:1874px;top:1117px;width:22px;height:22px;border-radius:50%;background:#8a8a8a;font-size:16px;color:#333;text-align:center;line-height:20px">&raquo;</div>
<svg class="a" style="left:0;top:0" width="1920" height="1146"><g fill="none" stroke-linejoin="miter"><path d="M1632 1085 L1668 1091.5 L1670 1114 L1641 1117 M1632 1085 L1633 1121 L1657 1132 L1697 1120 L1675 1116.5" stroke="rgba(235,235,235,0.75)" stroke-width="6"/><path d="M1643 1097 L1654 1112 L1673 1084" stroke="rgba(235,235,235,0.75)" stroke-width="7.5"/><path d="M1643 1097 L1654 1112 L1673 1084" stroke="rgba(50,50,50,0.8)" stroke-width="4.5"/><path d="M1632 1085 L1668 1091.5 L1670 1114 L1641 1117 M1632 1085 L1633 1121 L1657 1132 L1697 1120 L1675 1116.5" stroke="rgba(165,60,70,0.85)" stroke-width="3.2"/></g></svg>
<div class="a" style="left:1674px;top:1088px;font-size:25.7px;font-weight:bold;white-space:nowrap;letter-spacing:-0.4px;color:transparent;-webkit-text-stroke:2.5px rgba(225,225,225,0.55)">NOTEBOOKCHECK</div>
<div class="a" style="left:1674px;top:1088px;font-size:25.7px;font-weight:bold;white-space:nowrap;letter-spacing:-0.4px;color:rgba(165,60,70,0.82)">NOTEBOOK<span style="color:rgba(45,45,45,0.78)">CHECK</span></div>
<div class="a" style="left:1913px;top:99px;width:7px;height:1047px;background:linear-gradient(90deg,rgba(20,20,20,0) 0%,rgba(20,20,20,0.6) 40%,#111 100%)"></div>
</body></html>
